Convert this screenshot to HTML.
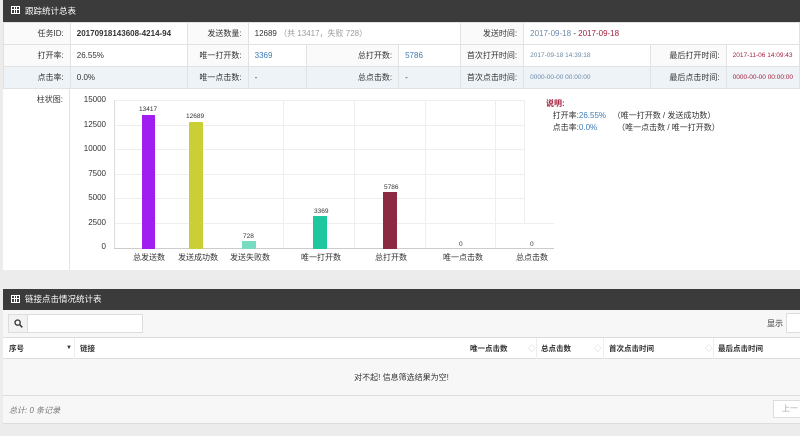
<!DOCTYPE html>
<html><head><meta charset="utf-8"><style>
*{box-sizing:border-box;margin:0;padding:0}
body{width:800px;height:436px;overflow:hidden;background:#ececec;font-family:"Liberation Sans","Noto Sans CJK SC",sans-serif;font-size:8px;color:#333;position:relative}
.abs{position:absolute}
.hdr{background:#3b3b3b;color:#fff;font-size:8.5px;line-height:20px;padding-left:22px}
.ico{position:absolute;left:8px;top:6px;width:9px;height:8px;border:1px solid #fff;background:
linear-gradient(#fff,#fff) 0 2px/100% 1px no-repeat,linear-gradient(#fff,#fff) 2px 0/1px 100% no-repeat,linear-gradient(#fff,#fff) 4px 0/1px 100% no-repeat}
table{border-collapse:collapse;position:absolute;left:3px;top:22px;width:797px}
td{border:1px solid #e2e2e2;height:22px;padding:0 6px;white-space:nowrap}
td.l{text-align:right;background:#fafafa}
tr.b td{background:#eef3f8}
.blue{color:#3b7ab6}.red{color:#a3203e}
.gl{position:absolute;background:#eee}
.sep{position:absolute;top:0;width:1px;height:21px;background:#eee}
.srt{position:absolute;color:#ccc;font-weight:normal}
</style></head><body>
<div class="abs" style="left:3px;top:0;width:797px;height:270px;background:#fff"></div>
<div class="abs hdr" style="left:3px;top:0;width:797px;height:22px;line-height:22px"><span class="ico"></span>跟踪统计总表</div>
<table>
<tr><td class="l" style="width:67px">任务ID:</td><td style="width:117px;font-weight:bold">20170918143608-4214-94</td><td class="l" style="width:61px">发送数量:</td><td colspan="3">12689 <span style="color:#999">（共 13417，失败 728）</span></td><td class="l" style="width:62px">发送时间:</td><td colspan="3"><span style="color:#6b88a8">2017-09-18</span> - <span class="red">2017-09-18</span></td></tr>
<tr><td class="l">打开率:</td><td>26.55%</td><td class="l">唯一打开数:</td><td class="blue" style="width:59px">3369</td><td class="l" style="width:92px">总打开数:</td><td class="blue" style="width:62px">5786</td><td class="l">首次打开时间:</td><td style="width:127px;font-size:6.5px;color:#6b88a8">2017-09-18 14:39:18</td><td class="l" style="width:76px">最后打开时间:</td><td class="red" style="font-size:6.5px">2017-11-06 14:09:43</td></tr>
<tr class="b"><td class="l">点击率:</td><td>0.0%</td><td class="l">唯一点击数:</td><td>-</td><td class="l">总点击数:</td><td>-</td><td class="l">首次点击时间:</td><td style="font-size:6.5px;color:#6b88a8">0000-00-00 00:00:00</td><td class="l">最后点击时间:</td><td class="red" style="font-size:6.5px">0000-00-00 00:00:00</td></tr>
</table>
<div class="abs" style="left:3px;top:88px;width:67px;height:182px;border-right:1px solid #e2e2e2;text-align:right;padding:6px 6px 0 0">柱状图:</div>
<div class="abs" style="left:70px;top:88px;width:36px;text-align:right;font-size:8px;line-height:24.5px">15000<br>12500<br>10000<br>7500<br>5000<br>2500<br>0</div>
<div class="gl" style="left:114px;top:100px;width:410px;height:1px"></div>
<div class="gl" style="left:114px;top:125px;width:410px;height:1px"></div>
<div class="gl" style="left:114px;top:149px;width:410px;height:1px"></div>
<div class="gl" style="left:114px;top:174px;width:410px;height:1px"></div>
<div class="gl" style="left:114px;top:198px;width:410px;height:1px"></div>
<div class="gl" style="left:114px;top:223px;width:440px;height:1px"></div>
<div class="gl" style="left:114px;top:100px;width:1px;height:149px;background:#ddd"></div>
<div class="gl" style="left:283px;top:100px;width:1px;height:149px"></div>
<div class="gl" style="left:354px;top:100px;width:1px;height:149px"></div>
<div class="gl" style="left:425px;top:100px;width:1px;height:149px"></div>
<div class="gl" style="left:495px;top:100px;width:1px;height:149px"></div>
<div class="gl" style="left:524px;top:100px;width:1px;height:123px"></div>
<div class="gl" style="left:114px;top:248px;width:440px;height:1px;background:#ccc"></div>
<div class="abs" style="left:142px;top:115px;width:13px;height:134px;background:#a01ff0"></div>
<div class="abs" style="left:189px;top:122px;width:14px;height:127px;background:#c9cf35"></div>
<div class="abs" style="left:242px;top:241px;width:14px;height:8px;background:#78dcc3"></div>
<div class="abs" style="left:313px;top:216px;width:14px;height:33px;background:#1ec79d"></div>
<div class="abs" style="left:383px;top:192px;width:14px;height:57px;background:#8b2a42"></div>
<div class="abs" style="font-size:6.5px;left:139px;top:106px">13417</div>
<div class="abs" style="font-size:6.5px;left:186px;top:113px">12689</div>
<div class="abs" style="font-size:6.5px;left:243px;top:233px">728</div>
<div class="abs" style="font-size:6.5px;left:314px;top:208px">3369</div>
<div class="abs" style="font-size:6.5px;left:384px;top:184px">5786</div>
<div class="abs" style="font-size:6.5px;left:459px;top:241px">0</div>
<div class="abs" style="font-size:6.5px;left:530px;top:241px">0</div>
<div class="abs" style="top:252px;left:133px">总发送数</div>
<div class="abs" style="top:252px;left:178px">发送成功数</div>
<div class="abs" style="top:252px;left:230px">发送失败数</div>
<div class="abs" style="top:252px;left:301px">唯一打开数</div>
<div class="abs" style="top:252px;left:375px">总打开数</div>
<div class="abs" style="top:252px;left:443px">唯一点击数</div>
<div class="abs" style="top:252px;left:516px">总点击数</div>
<div class="abs" style="left:546px;top:98px;line-height:12px"><b class="red">说明:</b><br>&nbsp;&nbsp;&nbsp;打开率:<span class="blue">26.55%</span>&nbsp;&nbsp;&nbsp;（唯一打开数 / 发送成功数）<br>&nbsp;&nbsp;&nbsp;点击率:<span class="blue">0.0%</span>&nbsp;&nbsp;&nbsp;&nbsp;&nbsp;&nbsp;&nbsp;&nbsp;&nbsp;（唯一点击数 / 唯一打开数）</div>
<div class="abs" style="left:3px;top:289px;width:797px;height:135px;background:#f7f7f7;border-bottom:1px solid #ddd"></div>
<div class="abs hdr" style="left:3px;top:289px;width:797px;height:21px;line-height:21px"><span class="ico"></span>链接点击情况统计表</div>
<div class="abs" style="left:8px;top:314px;width:135px;height:19px;border:1px solid #ddd;background:#fff"><div style="width:19px;height:17px;background:#f2f2f2;border-right:1px solid #ddd;padding:4px 0 0 5px"><svg width="9" height="9" viewBox="0 0 9 9"><circle cx="3.6" cy="3.6" r="2.6" fill="none" stroke="#333" stroke-width="1.3"/><path d="M5.5 5.5L8.3 8.3" stroke="#333" stroke-width="1.5"/></svg></div></div>
<div class="abs" style="left:767px;top:318px">显示</div>
<div class="abs" style="left:786px;top:313px;width:20px;height:20px;border:1px solid #ddd;background:#fff"></div>
<div class="abs" style="left:3px;top:337px;width:797px;height:22px;border-top:1px solid #ddd;border-bottom:1px solid #ddd;background:#fff;font-weight:bold;font-size:7.5px;line-height:21px">
<span class="abs" style="left:6px">序号</span><span class="abs" style="left:63px;font-size:6px">▼</span>
<span class="sep" style="left:71px"></span>
<span class="abs" style="left:77px">链接</span>
<span class="abs" style="left:467px">唯一点击数</span><span class="srt" style="left:525px">◇</span>
<span class="sep" style="left:533px"></span>
<span class="abs" style="left:538px">总点击数</span><span class="srt" style="left:591px">◇</span>
<span class="sep" style="left:600px"></span>
<span class="abs" style="left:606px">首次点击时间</span><span class="srt" style="left:702px">◇</span>
<span class="sep" style="left:710px"></span>
<span class="abs" style="left:715px">最后点击时间</span>
</div>
<div class="abs" style="left:3px;top:359px;width:797px;height:37px;border-bottom:1px solid #ddd;text-align:center;line-height:37px">对不起! 信息筛选结果为空!</div>
<div class="abs" style="left:9px;top:405px;font-style:italic;color:#777">总计: 0 条记录</div>
<div class="abs" style="left:773px;top:400px;width:30px;height:18px;border:1px solid #ddd;background:#fff;color:#aaa;line-height:16px;padding-left:8px">上一</div>
</body></html>
